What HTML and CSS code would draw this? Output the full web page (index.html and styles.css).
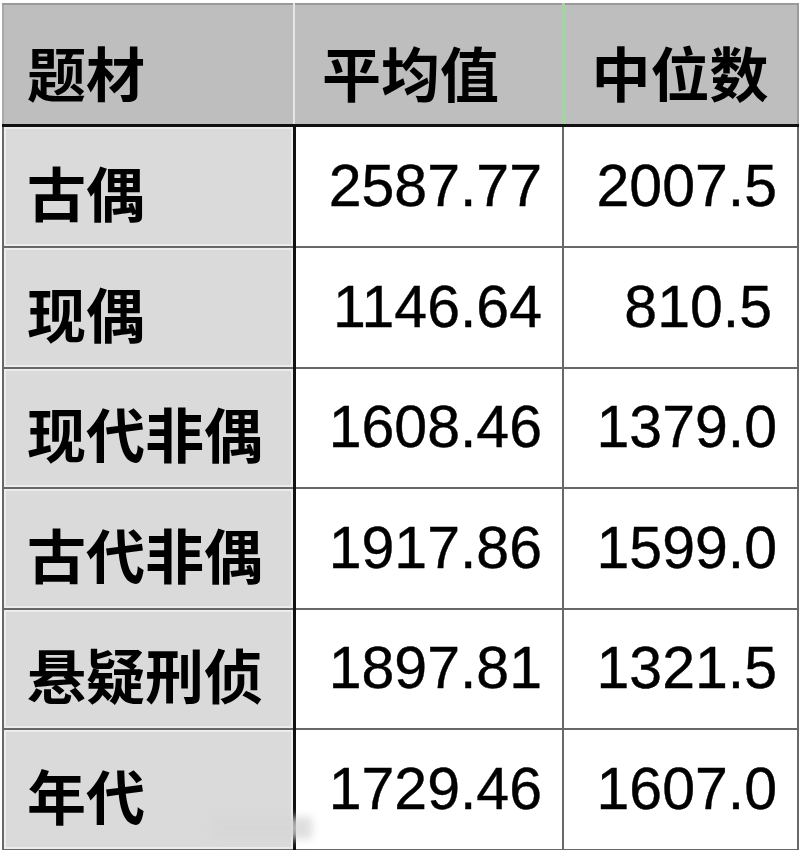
FILE: index.html
```html
<!DOCTYPE html>
<html lang="zh">
<head>
<meta charset="utf-8">
<title>题材统计</title>
<link rel="stylesheet" href="styles.css">
</head>
<body>
<div class="sheet">
  <table class="stats">
    <colgroup>
      <col class="c1"><col class="c2"><col class="c3">
    </colgroup>
    <thead>
      <tr>
        <th class="h-name">题材</th>
        <th class="h-avg">平均值</th>
        <th class="h-med">中位数</th>
      </tr>
    </thead>
    <tbody>
      <tr class="first"><td class="name">古偶</td><td class="num">2587.77</td><td class="num">2007.5</td></tr>
      <tr><td class="name">现偶</td><td class="num">1146.64</td><td class="num num-short">810.5</td></tr>
      <tr><td class="name">现代非偶</td><td class="num">1608.46</td><td class="num">1379.0</td></tr>
      <tr><td class="name">古代非偶</td><td class="num">1917.86</td><td class="num">1599.0</td></tr>
      <tr><td class="name">悬疑刑侦</td><td class="num">1897.81</td><td class="num">1321.5</td></tr>
      <tr><td class="name">年代</td><td class="num">1729.46</td><td class="num">1607.0</td></tr>
    </tbody>
  </table>
  <div class="watermark"></div>
</div>
</body>
</html>
```
FILE: styles.css
```css
html, body {
  margin: 0;
  padding: 0;
  background: #ffffff;
}

.sheet {
  position: relative;
  width: 800px;
  height: 850px;
  padding: 3px 0 0 2px;
  box-sizing: border-box;
}

.stats {
  border-collapse: collapse;
  table-layout: fixed;
  width: 795px;
  border: 2px solid #8a8a8a;
}

.c1 { width: 291px; }
.c2 { width: 269px; }
.c3 { width: 235px; }

.stats th,
.stats td {
  border: 2px solid #686868;
  padding: 0;
  white-space: nowrap;
  overflow: hidden;
}

.stats thead tr { height: 121px; }
.stats tbody tr { height: 120.5px; }
.stats tbody tr.first { height: 122px; }

.stats th {
  background: #bebebe;
  font-family: "Noto Sans CJK SC", "Noto Sans", sans-serif;
  font-weight: 700;
  font-size: 59px;
  line-height: 1;
  color: #000;
  text-align: left;
  vertical-align: middle;
  padding-top: 14px;
  border-top: 2px solid #9a9a9a;
  border-bottom: 3px solid #111111;
}

.stats th.h-name {
  padding-left: 23px;
  border-left: 2px solid #a8a8a8;
  border-right: 2px solid #e6e6e6;
}

.stats th.h-avg {
  padding-left: 27px;
  border-right: 3px solid #a6d3a6;
}

.stats th.h-med {
  padding-left: 27px;
  border-right: 2px solid #9a9a9a;
}

.stats td.name {
  background: #dadada;
  font-family: "Noto Sans CJK SC", "Noto Sans", sans-serif;
  font-weight: 700;
  font-size: 59px;
  line-height: 1;
  color: #000;
  padding-left: 23px;
  padding-top: 10px;
  vertical-align: middle;
  border-right: 3px solid #111111;
  box-shadow: inset 0 0 0 2px #ececec;
}

.stats td.num {
  background: #ffffff;
  font-family: "Liberation Sans", Arial, sans-serif;
  font-weight: 400;
  font-size: 59px;
  line-height: 1;
  color: #000;
  text-align: right;
  padding-right: 20px;
  vertical-align: middle;
  -webkit-text-stroke: 0.4px #000;
}

.stats td.num-short {
  padding-right: 25px;
}

.watermark {
  position: absolute;
  left: 212px;
  top: 817px;
  width: 100px;
  height: 22px;
  background: #d6d6d6;
  filter: blur(4px);
  opacity: 0.8;
}
```
